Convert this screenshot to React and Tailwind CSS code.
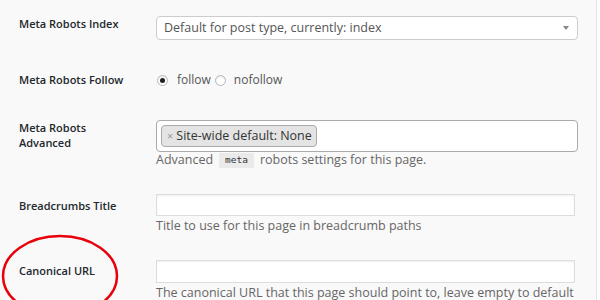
import React from "react";

const font = { fontFamily: '"Open Sans", "Noto Sans", sans-serif' };

function Radio({ checked }) {
  return (
    <span className="inline-flex items-center justify-center w-[11px] h-[11px] rounded-full border border-[#b4b9be] bg-white shadow-[inset_0_1px_2px_rgba(0,0,0,0.1)]">
      {checked && <span className="w-[5px] h-[5px] rounded-full bg-[#1e1e1e]" />}
    </span>
  );
}

export default function App() {
  return (
    <div
      className="relative w-[600px] h-[300px] overflow-hidden bg-white text-[#23282d]"
      style={font}
    >
      <div className="w-[597px] h-full bg-[#f9f9f9] border-r border-[#e5e5e5] flex flex-col">
        {/* Meta Robots Index */}
        <div className="flex">
          <div className="w-[156px] pl-[19px] pt-[16px] text-[11px] leading-[16px] font-semibold">Meta Robots Index</div>
          <div className="pt-[16px]">
            <div className="w-[422px] h-[24px] flex items-center justify-between bg-white border border-[#ccc] rounded-[4px] pl-[7px] pr-[8px] text-[12.5px] text-[#555]">
              <span>Default for post type, currently: index</span>
              <span className="w-0 h-0 border-l-[3.5px] border-r-[3.5px] border-t-[4px] border-l-transparent border-r-transparent border-t-[#888]" />
            </div>
          </div>
        </div>

        {/* Meta Robots Follow */}
        <div className="flex">
          <div className="w-[156px] pl-[19px] pt-[32px] text-[11px] leading-[16px] font-semibold">Meta Robots Follow</div>
          <div className="pt-[32px] h-[48px] flex items-center text-[12px] leading-[16px] text-[#555]">
            <span className="pl-[1px] flex items-center">
              <Radio checked />
              <span className="ml-[9px]">follow</span>
              <span className="ml-[4px] flex"><Radio /></span>
              <span className="ml-[8px]">nofollow</span>
            </span>
          </div>
        </div>

        {/* Meta Robots Advanced */}
        <div className="flex">
          <div className="w-[156px] pl-[19px] pt-[32px] text-[11px] leading-[15px] font-semibold">Meta Robots<br />Advanced</div>
          <div className="pt-[32px]">
            <div className="w-[422px] h-[32px] flex items-center bg-white border border-[#aaa] rounded-[4px] pl-[4px]">
              <span className="h-[22px] flex items-center bg-[#e4e4e4] border border-[#aaa] rounded-[4px] pl-[5px] pr-[4px] text-[12.5px] text-[#333]">
                <span className="text-[#999] text-[11px] mr-[3px]">×</span>
                Site-wide default: None
              </span>
            </div>
            <div className="h-[16px] flex items-center text-[12.5px] text-[#666]">
              Advanced
              <code className="mx-[6px] px-[6px] h-[15px] flex items-center bg-[#eaeaea] text-[#333] text-[9.5px]" style={{ fontFamily: '"DejaVu Sans Mono", monospace' }}>meta</code>
              robots settings for this page.
            </div>
          </div>
        </div>

        {/* Breadcrumbs Title */}
        <div className="flex">
          <div className="w-[156px] pl-[19px] pt-[30px] text-[11px] leading-[16px] font-semibold">Breadcrumbs Title</div>
          <div className="pt-[26px]">
            <div className="w-[419px] h-[22px] bg-white border border-[#ddd] shadow-[inset_0_1px_2px_rgba(0,0,0,0.07)]" />
            <div className="mt-[2px] h-[16px] flex items-center text-[12.5px] text-[#666]">Title to use for this page in breadcrumb paths</div>
          </div>
        </div>

        {/* Canonical URL */}
        <div className="flex">
          <div className="w-[156px] pl-[19px] pt-[29px] text-[11px] leading-[16px] font-semibold">Canonical URL</div>
          <div className="pt-[26px]">
            <div className="w-[419px] h-[23px] bg-white border border-[#ddd] shadow-[inset_0_1px_2px_rgba(0,0,0,0.07)]" />
            <div className="mt-[2px] h-[16px] flex items-center text-[12.5px] text-[#666] whitespace-nowrap">The canonical URL that this page should point to, leave empty to default</div>
          </div>
        </div>
      </div>

      {/* red annotation ellipse */}
      <svg className="absolute left-0 top-[233px]" width="122" height="90" viewBox="0 0 122 90">
        <ellipse cx="60" cy="43" rx="57" ry="40" fill="none" stroke="#e8000b" strokeWidth="2.5" />
      </svg>
    </div>
  );
}
